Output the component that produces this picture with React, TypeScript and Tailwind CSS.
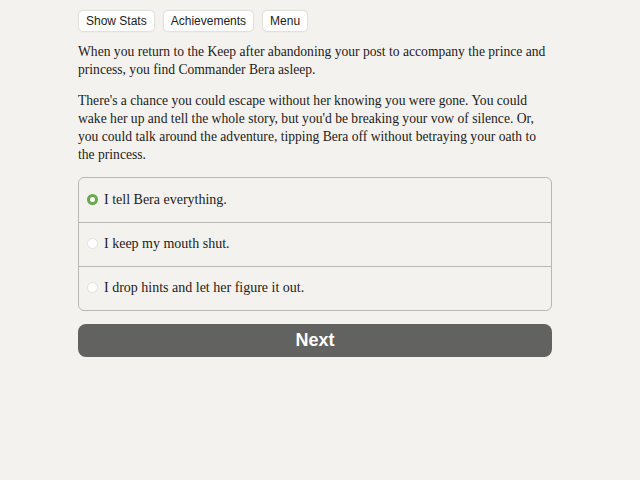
import { useState } from 'react';

const choices = [
  'I tell Bera everything.',
  'I keep my mouth shut.',
  'I drop hints and let her figure it out.',
];

export default function App() {
  const [picked, setPicked] = useState(0);

  return (
    <div className="min-h-[480px] bg-[#f4f2ee] text-[#1c1c1c]">
      <div className="ml-[78px] w-[474px] pt-[11px]">
        {/* Top bar */}
        <div className="flex gap-[10px] pl-px font-['Liberation_Sans',Arial,sans-serif] text-[12px]">
          {['Show Stats', 'Achievements', 'Menu'].map((label) => (
            <button
              key={label}
              className="h-[20px] rounded-[4px] bg-white px-[7px] leading-[20px] text-[#222] shadow-[0_0_2px_rgba(0,0,0,0.25)]"
            >
              {label}
            </button>
          ))}
        </div>

        {/* Story text */}
        <div className="mt-[12px] font-['Liberation_Serif','Times_New_Roman',serif] text-[13.6px] leading-[18px]">
          <p>
            When you return to the Keep after abandoning your post to accompany the prince and
            princess, you find Commander Bera asleep.
          </p>
          <p className="mt-[13px]">
            There's a chance you could escape without her knowing you were gone. You could
            wake her up and tell the whole story, but you'd be breaking your vow of silence. Or,
            you could talk around the adventure, tipping Bera off without betraying your oath to
            the princess.
          </p>
        </div>

        {/* Choices */}
        <div className="mt-[13px] overflow-hidden rounded-[6px] border border-[#b9b7b2] font-['Liberation_Serif','Times_New_Roman',serif] text-[14px]">
          {choices.map((c, i) => (
            <label
              key={c}
              onClick={() => setPicked(i)}
              className={`flex h-[44px] cursor-pointer items-center gap-[6px] pl-[8px] pb-[2px] ${i > 0 ? 'border-t border-[#b9b7b2]' : ''}`}
            >
              {picked === i ? (
                <span className="flex h-[11px] w-[11px] items-center justify-center rounded-full bg-[#6aa84f]">
                  <span className="h-[5px] w-[5px] rounded-full bg-white" />
                </span>
              ) : (
                <span className="h-[11px] w-[11px] rounded-full border border-[#e4e2de] bg-white" />
              )}
              <span>{c}</span>
            </label>
          ))}
        </div>

        <button className="mt-[13px] h-[33px] w-full rounded-[8px] bg-[#626260] font-['Liberation_Sans',Arial,sans-serif] text-[18px] font-bold text-white">
          Next
        </button>
      </div>
    </div>
  );
}
